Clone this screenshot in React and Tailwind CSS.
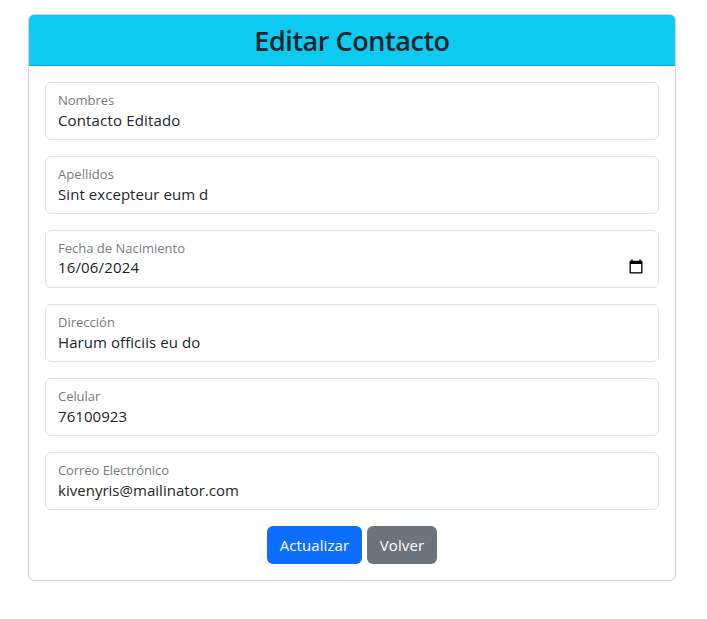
const fields = [
  { label: "Nombres", value: "Contacto Editado", labelClass: "tracking-[-0.05px]", valueClass: "tracking-[0.15px]" },
  { label: "Apellidos", value: "Sint excepteur eum d", labelClass: "tracking-[0.08px]", valueClass: "tracking-[0.06px]" },
  { label: "Fecha de Nacimiento", value: "16/06/2024", labelClass: "tracking-normal -mt-px", valueClass: "tracking-[0.15px] -mt-px", date: true },
  { label: "Dirección", value: "Harum officiis eu do", labelClass: "tracking-normal", valueClass: "tracking-[0.07px]" },
  { label: "Celular", value: "76100923", labelClass: "tracking-[-0.05px]", valueClass: "tracking-[0.05px]" },
  { label: "Correo Electrónico", value: "kivenyris@mailinator.com", labelClass: "tracking-[-0.07px]", valueClass: "tracking-[0.02px]" },
];

function CalendarIcon() {
  return (
    <svg width="14" height="15" viewBox="0 0 14 15" fill="none" className="shrink-0">
      <path d="M2.2 0.5h1.5v1.3h6.6v-1.3h1.5v1.3h0.7q1 0 1 1v10.7q0 1-1 1h-11q-1 0-1-1v-10.7q0-1 1-1h0.7z" fill="#000" />
      <path d="M1.8 5h10.4v8.2h-10.4z" fill="#fff" />
    </svg>
  );
}

function Field({ label, value, labelClass, valueClass, date }) {
  return (
    <div className="flex h-[58px] items-center justify-between rounded-md border border-[#dee2e6] pl-3 pr-[15px]">
      <div className="flex flex-col whitespace-nowrap">
        <label className={"text-[13px] leading-[18px] text-[#777b80] " + labelClass}>{label}</label>
        <span className={"text-[15px] leading-[22px] text-[#212529] " + valueClass}>{value}</span>
      </div>
      {date && <div className="mt-[15px]"><CalendarIcon /></div>}
    </div>
  );
}

export default function App() {
  return (
    <main className="h-[619px] w-[707px] bg-white pl-7 pt-3.5 font-['Open_Sans','Noto_Sans',sans-serif]">
      <section className="w-[648px] overflow-hidden rounded-md border border-[#d2d3d3]">
        <header className="flex h-[51px] items-center justify-center border-b border-[#0ba7c5] bg-[#0dcaf0] pt-0.5">
          <h1 className="text-[27px] font-semibold leading-8 tracking-[-0.45px] text-[#212529]">Editar Contacto</h1>
        </header>
        <form className="flex flex-col gap-4 p-4">
          {fields.map((field) => <Field key={field.label} {...field} />)}
          <div className="flex justify-center gap-[5px]">
            <button type="button" className="h-[38px] w-[95px] rounded-md bg-[#0d6efd] text-[15px] tracking-[0.08px] text-white">Actualizar</button>
            <button type="button" className="h-[38px] w-[70px] rounded-md bg-[#6c757d] text-[15px] tracking-[0.15px] text-white">Volver</button>
          </div>
        </form>
      </section>
    </main>
  );
}
